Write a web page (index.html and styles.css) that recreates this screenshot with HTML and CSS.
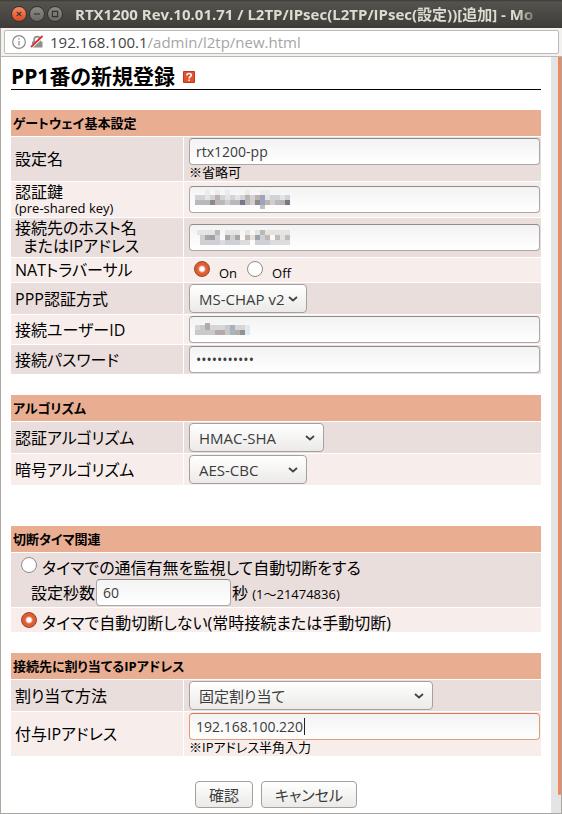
FILE: index.html
```html
<!DOCTYPE html>
<html lang="ja">
<head>
    <meta charset="UTF-8">
    <meta name="viewport" content="width=device-width, initial-scale=1.0">
    <title>RTX1200 Rev.10.01.71 / L2TP/IPsec</title>
    <link rel="stylesheet" href="styles.css">
</head>
<body>
    <div class="window">
        <header class="titlebar">
            <button class="win-button close" type="button" aria-label="閉じる">
                <svg viewBox="0 0 16 16"><path d="M5.5 5.5l5 5M10.5 5.5l-5 5"/></svg>
            </button>
            <button class="win-button" type="button" aria-label="最小化">
                <svg viewBox="0 0 16 16"><path d="M4.5 8h7"/></svg>
            </button>
            <button class="win-button" type="button" aria-label="最大化">
                <svg viewBox="0 0 16 16"><path d="M5 5h6v6h-6z"/></svg>
            </button>
            <div class="window-title">RTX1200 Rev.10.01.71 / L2TP/IPsec(L2TP/IPsec(設定))[追加] - Mo</div>
        </header>

        <div class="toolbar">
            <div class="address">
                <svg class="info-icon" viewBox="0 0 14 14">
                    <circle cx="7" cy="7" r="6.3"/>
                    <path d="M7 6v4.6M7 3.2v1.6"/>
                </svg>
                <svg class="lock-icon" viewBox="0 0 14 14">
                    <path class="shackle" d="M4.2 7V4.5a2.9 2.9 0 0 1 5.8 0V7"/>
                    <path class="lock-body" d="M2 6.5h10.5v6H2z"/>
                    <path class="gap" d="M1 12.5L13 1.5"/>
                    <path class="slash" d="M1 12L12.5 1"/>
                </svg>
                <div class="url"><span class="host">192.168.100.1</span>/admin/l2tp/new.html</div>
            </div>
        </div>

        <div class="viewport">
            <main class="page">
                <h1>PP1番の新規登録
                    <a class="help" href="#help" aria-label="ヘルプ">
                        <svg viewBox="0 0 12 12">
                            <path class="help-box" d="M0.5 0.5h11v11h-11z"/>
                            <path class="help-mark" d="M3.9 4.4C3.9 1.9 8.3 1.9 8.3 4.2C8.3 5.7 6.1 5.6 6.1 7.4M6.1 8.4v1.6"/>
                        </svg>
                    </a>
                </h1>

                <form>
                    <table class="settings">
                        <colgroup><col class="label-col"><col></colgroup>
                        <thead>
                            <tr><th colspan="2">ゲートウェイ基本設定</th></tr>
                        </thead>
                        <tbody>
                            <tr>
                                <td><label for="name">設定名</label></td>
                                <td>
                                    <input class="text" id="name" type="text" value="rtx1200-pp">
                                    <div class="note">※省略可</div>
                                </td>
                            </tr>
                            <tr>
                                <td><label for="key">認証鍵<span class="note">(pre-shared key)</span></label></td>
                                <td>
                                    <div class="field">
                                        <input class="text" id="key" type="text">
                                        <svg class="mosaic" width="95" height="20" viewBox="0 0 19 4" shape-rendering="crispEdges">
                                            <path fill="#ebebec" d="M2 0h1v1h-1zM4 0h1v1h-1zM6 0h1v1h-1zM10 0h1v1h-1zM13 0h2v1h-2z"/>
                                            <path fill="#d3d3d6" d="M0 1h19v1h-19z"/>
                                            <path fill="#b9b8bd" d="M0 2h19v1h-19z"/>
                                            <path fill="#bdb2ae" d="M4 1h1v1h-1zM10 1h1v1h-1zM12 1h1v1h-1zM14 2h1v1h-1zM17 2h1v1h-1z"/>
                                            <path fill="#e0e5e8" d="M2 1h1v1h-1zM6 1h1v1h-1zM8 1h1v1h-1zM14 1h1v1h-1zM17 1h1v1h-1z"/>
                                            <path fill="#8f8989" d="M3 2h1v1h-1zM12 2h1v1h-1z"/>
                                            <path fill="#77778c" d="M9 2h1v1h-1zM18 2h1v1h-1z"/>
                                            <path fill="#9da4c0" d="M13 1h1v2h-1z"/>
                                            <path fill="#d0cdcc" d="M11 2h1v1h-1zM15 2h1v1h-1zM6 2h1v1h-1z"/>
                                            <path fill="#c0bfc5" d="M13 3h1v0.8h-1z"/>
                                        </svg>
                                    </div>
                                </td>
                            </tr>
                            <tr>
                                <td><label for="host">接続先のホスト名<span class="indent">またはIPアドレス</span></label></td>
                                <td>
                                    <div class="field">
                                        <input class="text" id="host" type="text">
                                        <svg class="mosaic" width="95" height="17" viewBox="0 -0.4 19 3.4" shape-rendering="crispEdges">
                                            <path fill="#e6e4e2" d="M0.4 0h4.6v1h-4.6zM6 0h3v1h-3zM10 0h1v1h-1zM12 0h7v1h-7z"/>
                                            <path fill="#cfd0d4" d="M1 1h4v2h-4zM6 1h3v2h-3zM10 1h9v1h-9zM12 2h3v1h-3z"/>
                                            <path fill="#dcdcdd" d="M5 2h1v1h-1zM9 2h2v1h-2zM15 2h4v1h-4z"/>
                                            <path fill="#9da3ab" d="M3 1h1v1h-1zM12 1h1v1h-1z"/>
                                            <path fill="#a9a6a7" d="M2 1h1v1h-1zM6 1h1v1h-1zM8 1h1v1h-1z"/>
                                            <path fill="#bbb8b6" d="M4 0h1v1h-1zM10 1h1v1h-1zM14 1h1v1h-1zM13 0h1v1h-1z"/>
                                            <path fill="#e9e0d8" d="M11 1h1v1h-1zM15 0h1v1h-1zM17 1h1v1h-1z"/>
                                            <path fill="#f9f9f9" d="M15 1h1v1h-1z"/>
                                            <path fill="#b9bec5" d="M16 1h1v1h-1zM18 1h1v1h-1z"/>
                                        </svg>
                                    </div>
                                </td>
                            </tr>
                            <tr>
                                <td>NATトラバーサル</td>
                                <td>
                                    <div class="radios">
                                        <label><input type="radio" name="nat" checked><span>On</span></label>
                                        <label><input type="radio" name="nat"><span>Off</span></label>
                                    </div>
                                </td>
                            </tr>
                            <tr>
                                <td><label for="ppp">PPP認証方式</label></td>
                                <td>
                                    <select class="small" id="ppp"><option>MS-CHAP v2</option></select>
                                </td>
                            </tr>
                            <tr>
                                <td><label for="user">接続ユーザーID</label></td>
                                <td>
                                    <div class="field">
                                        <input class="text" id="user" type="text">
                                        <svg class="mosaic" width="55" height="15" viewBox="0 0 11 3" shape-rendering="crispEdges">
                                            <path fill="#c9c8ca" d="M0 1h10v2h-10z"/>
                                            <path fill="#b3abaa" d="M2 0.6h1v1.4h-1zM4 2h2v1h-2zM8 2h1v1h-1z"/>
                                            <path fill="#d7d5d6" d="M3 1h3v1h-3zM0 1h1v1h-1zM8 1h2v1h-2z"/>
                                            <path fill="#a9b3bd" d="M7 1h1v2h-1z"/>
                                            <path fill="#929296" d="M9 2h1v1h-1z"/>
                                            <path fill="#dfeaf5" d="M10 1h1v2h-1z"/>
                                        </svg>
                                    </div>
                                </td>
                            </tr>
                            <tr>
                                <td><label for="password">接続パスワード</label></td>
                                <td><input class="text" id="password" type="password" value="abcdefghijk"></td>
                            </tr>
                        </tbody>
                    </table>

                    <table class="settings">
                        <colgroup><col class="label-col"><col></colgroup>
                        <thead>
                            <tr><th colspan="2">アルゴリズム</th></tr>
                        </thead>
                        <tbody>
                            <tr>
                                <td><label for="auth">認証アルゴリズム</label></td>
                                <td>
                                    <select class="medium" id="auth"><option>HMAC-SHA</option></select>
                                </td>
                            </tr>
                            <tr>
                                <td><label for="cipher">暗号アルゴリズム</label></td>
                                <td>
                                    <select class="small" id="cipher"><option>AES-CBC</option></select>
                                </td>
                            </tr>
                        </tbody>
                    </table>

                    <table class="settings timer">
                        <thead>
                            <tr><th>切断タイマ関連</th></tr>
                        </thead>
                        <tbody>
                            <tr>
                                <td>
                                    <label class="option"><input type="radio" name="timer">タイマでの通信有無を監視して自動切断をする</label>
                                    <div class="seconds">
                                        <label for="seconds">設定秒数</label>
                                        <input class="text" id="seconds" type="text" value="60">
                                        <span>秒 <span class="note">(1〜21474836)</span></span>
                                    </div>
                                </td>
                            </tr>
                            <tr>
                                <td>
                                    <label class="option"><input type="radio" name="timer" checked>タイマで自動切断しない(常時接続または手動切断)</label>
                                </td>
                            </tr>
                        </tbody>
                    </table>

                    <table class="settings">
                        <colgroup><col class="label-col"><col></colgroup>
                        <thead>
                            <tr><th colspan="2">接続先に割り当てるIPアドレス</th></tr>
                        </thead>
                        <tbody>
                            <tr>
                                <td><label for="method">割り当て方法</label></td>
                                <td>
                                    <select class="large" id="method"><option>固定割り当て</option></select>
                                </td>
                            </tr>
                            <tr>
                                <td><label for="ip">付与IPアドレス</label></td>
                                <td>
                                    <div class="field">
                                        <input class="text active" id="ip" type="text" value="192.168.100.220">
                                        <span class="caret"></span>
                                    </div>
                                    <div class="note">※IPアドレス半角入力</div>
                                </td>
                            </tr>
                        </tbody>
                    </table>

                    <div class="actions">
                        <button class="button" type="button">確認</button>
                        <button class="button" type="button">キャンセル</button>
                    </div>
                </form>
            </main>
            <div class="scrollbar"><div class="thumb"></div></div>
        </div>
    </div>
</body>
</html>
```
FILE: styles.css
```css
* {
    box-sizing: border-box;
}

body {
    margin: 0;
    font-family: "Open Sans", "Noto Sans CJK JP", sans-serif;
    font-size: 16px;
    color: #000;
    background-color: #fff;
}

.window {
    display: flex;
    flex-direction: column;
    min-height: 100vh;
}

/* window frame */
.titlebar {
    display: flex;
    align-items: center;
    gap: 2px;
    height: 28px;
    padding: 0 22px 0 11px;
    background: linear-gradient(#3a3935 0, #55534e 2px, #3d3c38 100%);
}

.win-button {
    flex: none;
    width: 16px;
    height: 16px;
    padding: 0;
    border: 1px solid #33322f;
    border-radius: 50%;
    background: linear-gradient(#8c8a83, #6b6963);
}

.win-button svg {
    display: block;
    fill: none;
    stroke: #34332f;
    stroke-width: 1.3;
}

.win-button.close {
    background: linear-gradient(#f58a65, #df4c1d);
}

.window-title {
    flex: 1;
    margin-left: 10px;
    overflow: hidden;
    white-space: nowrap;
    font-size: 15px;
    line-height: 22px;
    font-weight: bold;
    color: #dfdbd2;
    mask-image: linear-gradient(to left, transparent, #000 22px);
}

.toolbar {
    padding: 2px 3px;
    border-bottom: 1px solid #bcb8b2;
    border-left: 1px solid #aaa6a1;
    background-color: #f2f1f0;
}

.address {
    display: flex;
    align-items: center;
    height: 24px;
    padding: 0 7px;
    border: 1px solid #bfbab5;
    border-radius: 2px;
    background-color: #fff;
}

.info-icon {
    width: 14px;
    height: 14px;
    fill: none;
    stroke: #8b8b8b;
    stroke-width: 1.2;
}

.lock-icon {
    width: 14px;
    height: 14px;
    margin: 0 6px 0 4px;
    fill: none;
}

.shackle {
    stroke: #8f8f8f;
    stroke-width: 1.8;
}

.lock-body {
    fill: #8f8f8f;
}

.gap {
    stroke: #fff;
    stroke-width: 2.5;
}

.slash {
    stroke: #d92d2a;
    stroke-width: 1.8;
}

.url {
    font-size: 15px;
    color: #a5a5a5;
}

.host {
    color: #444;
}

/* page */
.viewport {
    display: flex;
    flex: 1;
    border: 1px solid #aaa6a1;
    border-top: none;
}

.page {
    flex: 1;
    padding: 7px 10px 4px;
    font-feature-settings: "palt";
}

.scrollbar {
    width: 10px;
    padding: 0 0 18px 7px;
    background-color: #e4e4e4;
}

.thumb {
    height: 100%;
    border-radius: 0 0 2px 2px;
    background-color: #f08763;
}

h1 {
    display: flex;
    align-items: center;
    gap: 8px;
    margin: 0 0 20px;
    border-bottom: 1px solid #000;
    font-size: 21px;
    line-height: 25px;
}

.help svg {
    display: block;
    width: 12px;
    height: 12px;
}

.help-box {
    fill: #e4512b;
    stroke: #b83d20;
}

.help-mark {
    fill: none;
    stroke: #fff;
    stroke-width: 1.6;
}

.settings {
    width: 100%;
    margin-bottom: 21px;
    border-spacing: 0;
    table-layout: fixed;
    line-height: 18px;
}

.label-col {
    width: 172px;
}

.settings th {
    height: 26px;
    padding: 0 2px;
    text-align: left;
    font-size: 13px;
    background-color: #e9ae92;
}

.settings td {
    padding: 1px 1px 1px 4px;
    border-top: 1px solid #fff;
    background-color: #f7eeec;
}

.settings tbody tr:nth-child(odd) td {
    background-color: #eadedc;
}

.settings td + td {
    padding-left: 5px;
    border-left: 1px solid #fff;
}

label {
    display: block;
}

.note {
    display: block;
    font-size: 13px;
    line-height: 15px;
}

.indent {
    display: block;
    padding-left: 8px;
    line-height: 19px;
}

.field {
    position: relative;
}

/* controls */
.text {
    display: block;
    width: 100%;
    height: 27px;
    padding: 0 6px;
    border: 1px solid #a9a8a6;
    border-top-color: #8d8c8a;
    border-radius: 4px;
    font-family: inherit;
    font-size: 14px;
    color: #3c3c3c;
    background: linear-gradient(#f3f3f3, #fff);
}

.text.active {
    border-color: #e59a78;
    border-top-color: #dd7650;
}

.mosaic {
    position: absolute;
    left: 6px;
    top: 4px;
}

.caret {
    position: absolute;
    left: 115px;
    top: 5px;
    width: 1px;
    height: 17px;
    background-color: #222;
}

select,
.button {
    border: 1px solid #a3a19e;
    border-radius: 4px;
    font-family: inherit;
    font-size: 15px;
    font-feature-settings: inherit;
    color: #3c3c3c;
    background-color: #f5f4f3;
    background-image: linear-gradient(#fff, #ebeae8);
}

select {
    display: block;
    appearance: none;
    height: 29px;
    padding: 0 20px 0 9px;
    background-image: url("data:image/svg+xml,%3Csvg xmlns='http://www.w3.org/2000/svg' width='10' height='6'%3E%3Cpath d='M1 1l4 3.5L9 1' fill='none' stroke='%23444' stroke-width='1.8'/%3E%3C/svg%3E"), linear-gradient(#fff, #ebeae8);
    background-repeat: no-repeat;
    background-position: right 8px center, 0 0;
}

.small {
    width: 118px;
}

.medium {
    width: 135px;
}

.large {
    width: 244px;
}

input[type="radio"] {
    appearance: none;
    flex: none;
    width: 16px;
    height: 16px;
    margin: 0;
    border: 1px solid #8e8c89;
    border-radius: 50%;
    background-color: #fff;
}

input[type="radio"]:checked {
    border-color: #a4401f;
    background: radial-gradient(circle, #fff 2px, #dd6238 4px, #d5562c 100%);
}

.radios {
    display: flex;
    gap: 10px;
    height: 22px;
    padding: 2px 5px 0;
    font-size: 13px;
}

.radios label {
    display: flex;
    gap: 9px;
}

.radios span {
    padding-top: 3px;
}

.option {
    display: flex;
    gap: 5px;
    height: 25px;
    padding: 3px 6px 0;
    line-height: 22px;
}

.timer tr:last-child .option {
    height: 22px;
}

.seconds {
    display: flex;
    align-items: center;
    gap: 1px;
    padding-left: 16px;
}

.seconds .text {
    width: 135px;
}

.seconds .note {
    display: inline;
}

.timer {
    margin-top: 41px;
}

.actions {
    display: flex;
    justify-content: center;
    gap: 8px;
    margin-top: 25px;
}

.button {
    height: 27px;
    padding: 0 13px;
}
```
